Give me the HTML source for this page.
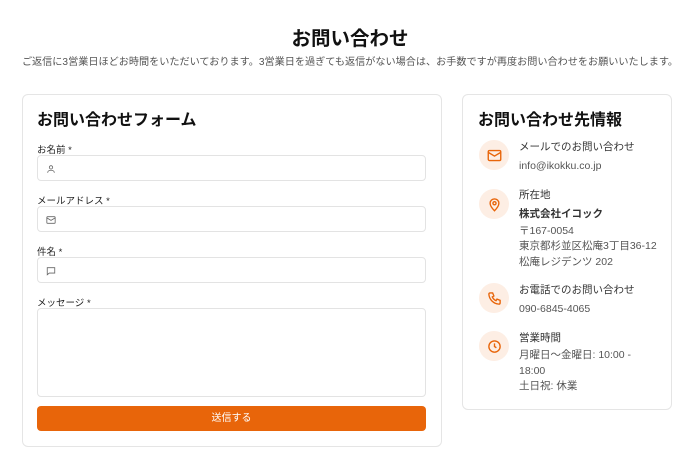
<!DOCTYPE html>
<html><head><meta charset="utf-8"><style>
*{box-sizing:border-box;margin:0;padding:0}
body{width:700px;height:467px;background:#fff;font-family:"Liberation Sans","Noto Sans CJK JP",sans-serif;color:#111;position:relative;overflow:hidden}
.abs{position:absolute}
h1{position:absolute;top:22px;left:0;width:700px;text-align:center;font-size:19.5px;font-weight:bold}
.sub{top:53px;left:0;width:700px;text-align:center;font-size:10.15px;color:#555}
.card{border:1px solid #e5e5e5;border-radius:6px;background:#fff}
h2{position:absolute;font-size:16px;font-weight:bold}
.lbl{font-size:9.5px;color:#222}
.inp{border:1px solid #e3e3e3;border-radius:4px;left:37px;width:389px}
.ic{width:30px;height:30px;border-radius:50%;background:#fdeee4;left:479px;display:flex;align-items:center;justify-content:center}
.t{left:519px;font-size:10.5px;color:#333;line-height:16px}
.g{color:#555}
</style></head><body>
<h1>お問い合わせ</h1>
<div class="abs sub">ご返信に3営業日ほどお時間をいただいております。3営業日を過ぎても返信がない場合は、お手数ですが再度お問い合わせをお願いいたします。</div>
<div class="abs card" style="left:22px;top:94px;width:420px;height:353px"></div>
<h2 style="left:37px;top:106px">お問い合わせフォーム</h2>
<div class="abs lbl" style="left:37px;top:142px">お名前 *</div>
<div class="abs inp" style="top:155px;height:26px"><svg class="abs" style="left:8px;top:8px" width="10" height="10" viewBox="0 0 24 24" fill="none" stroke="#666" stroke-width="2"><circle cx="12" cy="8" r="4"/><path d="M4 21c0-4 4-6 8-6s8 2 8 6"/></svg></div>
<div class="abs lbl" style="left:37px;top:193px">メールアドレス *</div>
<div class="abs inp" style="top:206px;height:26px"><svg class="abs" style="left:8px;top:8px" width="10" height="10" viewBox="0 0 24 24" fill="none" stroke="#666" stroke-width="2"><rect x="2" y="4" width="20" height="16" rx="2"/><path d="M2 7l10 6 10-6"/></svg></div>
<div class="abs lbl" style="left:37px;top:244px">件名 *</div>
<div class="abs inp" style="top:257px;height:26px"><svg class="abs" style="left:8px;top:8px" width="10" height="10" viewBox="0 0 24 24" fill="none" stroke="#666" stroke-width="2"><path d="M3 4h18v13H8l-5 4z"/></svg></div>
<div class="abs lbl" style="left:37px;top:295px">メッセージ *</div>
<div class="abs inp" style="top:308px;height:89px"></div>
<div class="abs" style="left:37px;top:406px;width:389px;height:25px;background:#e8650a;border-radius:4px;color:#fff;font-size:10px;text-align:center;line-height:25px">送信する</div>

<div class="abs card" style="left:462px;top:94px;width:210px;height:316px"></div>
<h2 style="left:478px;top:106px">お問い合わせ先情報</h2>
<div class="abs ic" style="top:140px"><svg width="15" height="15" viewBox="0 0 24 24" fill="none" stroke="#e8650a" stroke-width="2.2"><rect x="2" y="4" width="20" height="16" rx="2"/><path d="M2 7l10 6 10-6"/></svg></div>
<div class="abs t" style="top:139px">メールでのお問い合わせ<br><span class="g" style="line-height:22px">info@ikokku.co.jp</span></div>
<div class="abs ic" style="top:189px"><svg width="15" height="15" viewBox="0 0 24 24" fill="none" stroke="#e8650a" stroke-width="2.2"><path d="M12 22s-7-7-7-12a7 7 0 0114 0c0 5-7 12-7 12z"/><circle cx="12" cy="10" r="2.5"/></svg></div>
<div class="abs t" style="top:188px;line-height:15.5px">所在地<br><b style="line-height:20px">株式会社イコック</b><br><span class="g">〒167-0054<br>東京都杉並区松庵3丁目36-12<br>松庵レジデンツ 202</span></div>
<div class="abs ic" style="top:283px"><svg width="15" height="15" viewBox="0 0 24 24" fill="none" stroke="#e8650a" stroke-width="2.2"><path d="M5 3h4l2 5-2.5 1.5a11 11 0 006 6L16 13l5 2v4a2 2 0 01-2 2A17 17 0 013 5a2 2 0 012-2z"/></svg></div>
<div class="abs t" style="top:282px">お電話でのお問い合わせ<br><span class="g" style="line-height:22px">090-6845-4065</span></div>
<div class="abs ic" style="top:331px"><svg width="15" height="15" viewBox="0 0 24 24" fill="none" stroke="#e8650a" stroke-width="2.2"><circle cx="12" cy="12" r="9"/><path d="M12 7v5l3 2"/></svg></div>
<div class="abs t" style="top:330px">営業時間<br><span class="g" style="display:block;margin-top:2px;line-height:15.5px">月曜日〜金曜日: 10:00 -<br>18:00<br>土日祝: 休業</span></div>
</body></html>
